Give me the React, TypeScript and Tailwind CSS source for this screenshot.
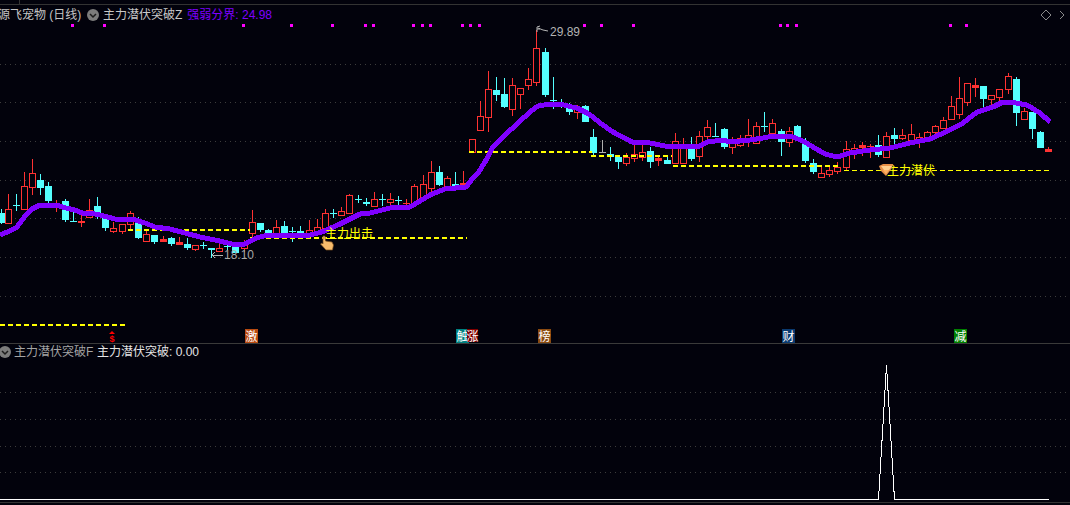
const BG = "#02020c";
const RED = "#ff3232";
const CYAN = "#54ffff";

type C = [number, string, number, number, number, number];
const candles: C[] = [
  [1,"c",209,224,213,222],[8,"r",194,223,209,223],[16,"c",194,211,205,205],[24,"r",172,209,186,209],[32,"r",159,195,173,187],
  [40,"c",174,195,180,187],[48,"c",182,203,186,200],[56,"r",200,212,205,205],[65,"c",199,222,201,219],[73,"c",212,222,221,221],
  [81,"r",210,227,221,222],[89,"r",199,218,210,217],[97,"c",197,219,206,213],[105,"c",215,231,218,227],[113,"r",222,233,228,231],
  [122,"r",224,234,224,231],[130,"r",211,229,213,224],[138,"c",217,239,223,237],[146,"r",231,241,234,241],[154,"c",235,244,235,241],
  [163,"r",236,242,239,241],[171,"c",237,246,238,243],[179,"r",237,245,242,244],[187,"c",238,250,244,247],[195,"r",245,251,245,249],
  [203,"c",242,249,245,245],[211,"c",248,258,248,249],[219,"r",244,251,248,251],[227,"c",243,250,246,246],[235,"c",245,253,246,252],
  [244,"r",240,252,244,248],[252,"r",210,237,222,233],[260,"c",223,232,223,229],[268,"c",229,237,230,235],[276,"r",220,235,227,233],
  [284,"c",221,233,226,233],[292,"c",227,242,231,231],[300,"c",226,236,231,235],[309,"r",220,235,230,234],[317,"r",219,235,227,233],
  [325,"r",209,232,213,228],[333,"c",209,218,213,213],[341,"r",207,215,211,215],[349,"r",194,213,195,213],[358,"c",195,203,199,199],
  [366,"c",198,206,202,203],[374,"r",192,206,199,206],[382,"c",194,206,199,199],[390,"r",193,205,199,202],[398,"c",196,205,200,200],
  [406,"r",199,205,203,203],[414,"r",184,204,186,204],[423,"r",175,200,184,198],[431,"r",161,192,172,188],[439,"c",166,186,172,184],
  [447,"r",176,188,178,186],[455,"c",172,188,184,185],[463,"r",171,187,183,184],[472,"r",139,152,139,152],[480,"r",101,130,116,130],
  [488,"r",71,132,89,117],[496,"c",77,101,90,94],[504,"c",78,108,94,106],[512,"r",78,116,85,109],[520,"r",88,109,88,94],
  [528,"r",68,90,79,85],[536,"r",30,86,48,82],[545,"c",48,97,52,94],[553,"c",77,109,100,100],[561,"c",99,108,104,106],
  [569,"c",103,115,107,111],[577,"r",105,119,108,112],[585,"c",105,122,106,121],[593,"c",129,155,137,152],[602,"g",140,153,152,152],
  [610,"c",147,161,154,156],[618,"c",157,169,157,161],[626,"r",153,166,157,163],[634,"r",143,162,154,158],[642,"r",145,161,152,157],
  [650,"c",147,168,151,161],[658,"r",157,166,158,160],[667,"c",157,164,160,163],[675,"r",133,163,141,163],[683,"r",138,163,145,163],
  [691,"c",137,161,145,158],[699,"r",131,162,136,156],[707,"r",120,140,127,136],[715,"c",123,137,136,136],[724,"c",128,149,129,146],
  [732,"r",137,154,139,147],[740,"r",135,147,138,145],[748,"r",119,147,135,140],[756,"r",122,144,126,143],[764,"c",112,132,126,126],
  [772,"r",119,136,123,133],[781,"c",129,156,131,141],[789,"r",127,147,131,142],[797,"c",125,140,126,137],[805,"c",138,163,141,160],
  [813,"c",159,174,163,171],[821,"r",167,177,173,177],[829,"r",167,177,170,174],[837,"r",162,174,167,171],[846,"r",141,170,149,167],
  [854,"r",144,159,148,151],[862,"r",142,156,145,147],[870,"r",144,158,146,146],[878,"c",135,157,145,154],[886,"r",132,157,136,157],
  [894,"c",128,146,135,138],[902,"r",129,140,135,138],[911,"r",124,140,134,140],[919,"r",133,148,137,142],[927,"r",131,142,132,138],
  [935,"r",125,135,126,132],[943,"r",117,129,120,128],[951,"r",96,119,106,119],[959,"r",77,119,98,114],[967,"r",83,106,83,102],
  [975,"r",78,97,85,87],[983,"c",86,108,86,98],[991,"r",95,107,95,99],[999,"r",89,103,89,97],[1008,"r",73,94,76,89],
  [1016,"c",77,126,79,112],[1024,"r",108,119,111,119],[1032,"c",112,139,112,128],[1040,"c",131,147,132,147],[1048,"r",147,151,149,151],
];

const ma = "0,235 10,231 17,227 25,216 32,209 40,205 45,205 56,205 66,208 75,210 82,213 90,213 100,215 115,219 132,219 145,223 155,227 170,229 185,233 200,237 215,240 232,244 245,244 256,238 268,235 290,235 310,235 322,232 340,224 360,214 370,213 390,208 410,207 430,195 445,189 466,187 473,178 478,173 485,162 493,147 505,135 518,123 530,112 538,106 550,104 560,104 572,107 577,108 587,113 593,117 600,123 613,132 632,142 645,142 660,145 670,147 680,146 700,146 707,142 723,140 730,142 750,140 763,138 773,136 793,137 803,141 813,147 825,154 837,157 850,153 870,150 890,148 910,143 930,139 950,130 963,123 977,112 993,107 1003,102 1010,102 1027,105 1040,113 1050,122";

const squares = [72,104,243,291,332,365,373,413,422,430,462,470,479,584,601,633,780,787,796,950,966];
const topGrid = [64,102,141,180,218,257,296];
const lowGrid = [392,419,446,472];
const dashes: [number, number, number, number][] = [
  [0,125,325,2],[128,250,230,2],[250,467,238,2],[469,592,152,2],[591,672,156,2],[673,840,166,2],[844,1052,170.5,1],
];
const badges: [number, number, number, string, string][] = [
  [245,13,14,"#b84a10","激"],[456,13,14,"#008080","触"],[467,11,13,"#800000","涨"],[538,13,14,"#8b4a10","榜"],[782,13,14,"#0a3a70","财"],[954,13,14,"#008000","减"],
];

function Candle({ c }: { c: C }) {
  const [x, t, w1, w2, b1, b2] = c;
  const col = t === "r" ? RED : t === "c" ? CYAN : "#b0b0b0";
  const flat = b2 - b1 <= 2;
  return (
    <g shapeRendering="crispEdges">
      <line x1={x + 0.5} x2={x + 0.5} y1={w1} y2={w2} stroke={col} />
      {flat ? (
        <rect x={x - 3} y={b1} width={7} height={b2 - b1 + 1} fill={col} />
      ) : (
        <rect x={x - 2.5} y={b1 + 0.5} width={6} height={b2 - b1} fill={t === "r" ? BG : col} stroke={col} />
      )}
    </g>
  );
}

function Chevron() {
  return (
    <svg width="12" height="12" viewBox="0 0 12 12" className="shrink-0">
      <circle cx="6" cy="6" r="6" fill="#7c7c7c" />
      <path d="M3 5 L6 8 L9 5" fill="none" stroke="#1c1c1c" strokeWidth="1.5" />
    </svg>
  );
}

export default function App() {
  return (
    <div className="w-[1070px] h-[505px] overflow-hidden flex flex-col bg-[#02020c] font-['Liberation_Sans','Noto_Sans_CJK_SC',sans-serif] text-[12px] leading-none">
      <div className="h-[5px] border-b border-[#333333] shrink-0 flex">
        <div className="ml-[19px] w-px h-full bg-[#333333]" />
      </div>
      <div className="h-[19px] shrink-0 flex items-center whitespace-nowrap">
        <span className="ml-[-2px] w-[89px] text-[#c4c4c4]">源飞宠物 (日线)</span>
        <Chevron />
        <span className="ml-[4px] text-[#c8c8c8]">主力潜伏突破Z</span>
        <span className="ml-[5px] text-[#7f00ff]">强弱分界: 24.98</span>
        <svg width="28" height="14" viewBox="0 0 28 14" className="ml-auto mr-[3px]">
          <path d="M7 2 L12 7 L7 12 L2 7 Z" fill="none" stroke="#8a8a8a" />
          <path d="M21 3 L25 7 L21 11" fill="none" stroke="#8a8a8a" />
        </svg>
      </div>
      <svg width="1070" height="319" viewBox="0 24 1070 319" className="block shrink-0 font-['Liberation_Sans','Noto_Sans_CJK_SC',sans-serif]">
        {topGrid.map((y) => (
          <line key={y} x1="0" x2="1070" y1={y + 0.5} y2={y + 0.5} stroke="#3c3c3c" strokeDasharray="1 4" shapeRendering="crispEdges" />
        ))}
        {squares.map((x) => (
          <rect key={x} x={x - 1} y={24} width="3" height="3" fill="#ff00ff" />
        ))}
        {candles.map((c) => (
          <Candle key={c[0]} c={c} />
        ))}
        {dashes.map(([a, b, y, h]) => (
          <line key={a} x1={a} x2={b} y1={y} y2={y} stroke="#ffff00" strokeWidth={h} strokeDasharray="5 3" shapeRendering="crispEdges" />
        ))}
        <polyline points={ma} fill="none" stroke="#7f00ff" strokeWidth="5" strokeLinejoin="round" shapeRendering="crispEdges" />

        <path d="M537 27 L537 32 M537 27 L540 26 M537 29 L540 29 M538 28 L543 30 L548 31" fill="none" stroke="#b4b4b4" />
        <text x="550" y="36" fontSize="12" fill="#b4b4b4">29.89</text>
        <path d="M212 255 L223 255 M212 255 L215 252 M212 255 L215 258" fill="none" stroke="#b4b4b4" shapeRendering="crispEdges" />
        <text x="224" y="259" fontSize="12" fill="#a8a8a8">18.10</text>

        <text x="325" y="238" fontSize="12" fill="#ffff00">主力出击</text>
        <text x="887" y="175" fontSize="12" fill="#ffff00">主力潜伏</text>

        <path d="M879 166 L883 164 L893 164 L892 168 L886 176 L881 171 Z" fill="#e89048" />
        <path d="M881 166 L892 166 L889 170 L884 170 Z" fill="#ffd090" />
        <path d="M883 170 L889 170 L886 174 Z" fill="#ffb060" />
        <path d="M323 236 L325 236 L325.5 241 L332 242 L333.5 245 L332.5 250 L326 250 L320.5 244 L322 243 L323 244 Z" fill="#f8bc6c" stroke="#7a4e1c" strokeWidth="0.7" />

        <path d="M112 331 L115 334 L109 334 Z" fill="#ff0000" />
        <text x="112" y="341.5" fontSize="9" fontWeight="700" fill="#ff0000" textAnchor="middle">$</text>
        {badges.map(([x, w, h, bg, t]) => (
          <g key={t}>
            <rect x={x} y="329" width={w} height={h} fill={bg} shapeRendering="crispEdges" />
            <text x={x + w / 2} y="340.5" fontSize="12" fill="#ffffff" textAnchor="middle">{t}</text>
          </g>
        ))}
      </svg>
      <div className="h-px shrink-0 bg-[#3a3a3a]" />
      <div className="h-[16px] shrink-0 flex items-center whitespace-nowrap">
        <span className="ml-[-1px] flex"><Chevron /></span>
        <span className="ml-[3px] w-[83px] text-[#a4a4a4]">主力潜伏突破F</span>
        <span className="text-[#e4e4e4]">主力潜伏突破: 0.00</span>
      </div>
      <svg width="1070" height="142" viewBox="0 360 1070 142" className="block shrink-0">
        {lowGrid.map((y) => (
          <line key={y} x1="0" x2="1070" y1={y + 0.5} y2={y + 0.5} stroke="#3c3c3c" strokeDasharray="1 4" shapeRendering="crispEdges" />
        ))}
        <polyline points="0,499.5 878.5,499.5 886.5,365 894.5,499.5 1049,499.5" fill="none" stroke="#ffffff" shapeRendering="crispEdges" />
      </svg>
      <div className="h-px shrink-0 bg-[#333333]" />
    </div>
  );
}
